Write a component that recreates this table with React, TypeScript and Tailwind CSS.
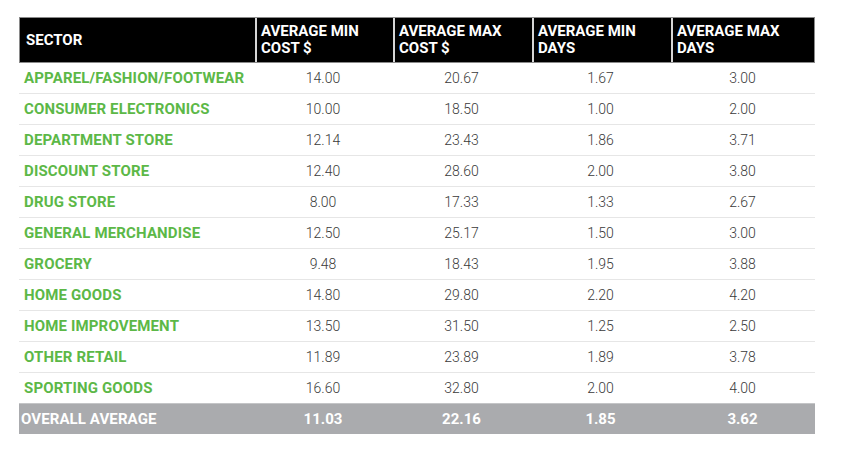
const rows: [string, string, string, string, string][] = [
  ["APPAREL/FASHION/FOOTWEAR", "14.00", "20.67", "1.67", "3.00"],
  ["CONSUMER ELECTRONICS", "10.00", "18.50", "1.00", "2.00"],
  ["DEPARTMENT STORE", "12.14", "23.43", "1.86", "3.71"],
  ["DISCOUNT STORE", "12.40", "28.60", "2.00", "3.80"],
  ["DRUG STORE", "8.00", "17.33", "1.33", "2.67"],
  ["GENERAL MERCHANDISE", "12.50", "25.17", "1.50", "3.00"],
  ["GROCERY", "9.48", "18.43", "1.95", "3.88"],
  ["HOME GOODS", "14.80", "29.80", "2.20", "4.20"],
  ["HOME IMPROVEMENT", "13.50", "31.50", "1.25", "2.50"],
  ["OTHER RETAIL", "11.89", "23.89", "1.89", "3.78"],
  ["SPORTING GOODS", "16.60", "32.80", "2.00", "4.00"],
];

const headers = ["SECTOR", "AVERAGE MIN COST $", "AVERAGE MAX COST $", "AVERAGE MIN DAYS", "AVERAGE MAX DAYS"];

const cols = "grid grid-cols-[235px_138px_139px_139px_145px]";

export default function App() {
  return (
    <div className="min-h-screen bg-white pt-[17px] pl-[19px] font-['Roboto',sans-serif]">
      <div className="w-[796px]">
        {/* header */}
        <div className={`${cols} h-[46px] border border-[#8a8a8a] bg-black`}>
          {headers.map((h, i) => (
            <div
              key={h}
              className={`flex items-center pr-2 text-[15px] font-bold leading-[17px] text-white ${
                i === 0 ? "pl-[6px]" : "border-l-2 border-[#d6d6d6] pl-[4px]"
              }`}
            >
              {h}
            </div>
          ))}
        </div>

        {rows.map((r) => (
          <div key={r[0]} className={`${cols} h-[31px] items-center border-b border-[#e6e6e6]`}>
            <div className="pl-[5px] text-[15px] font-bold tracking-[0.15px] text-[#5cb847]">{r[0]}</div>
            {r.slice(1).map((v, i) => (
              <div key={i} className="text-center text-[14px] font-light text-[#3a3a3a]">
                {v}
              </div>
            ))}
          </div>
        ))}

        <div className={`${cols} h-[31px] items-center bg-[#aaabae] -mt-px border-t border-[#c4c5c7]`}>
          <div className="pl-[2px] text-[15px] font-bold tracking-[0.1px] text-white">OVERALL AVERAGE</div>
          {["11.03", "22.16", "1.85", "3.62"].map((v) => (
            <div key={v} className="text-center text-[15px] font-bold text-white">
              {v}
            </div>
          ))}
        </div>
      </div>
    </div>
  );
}
